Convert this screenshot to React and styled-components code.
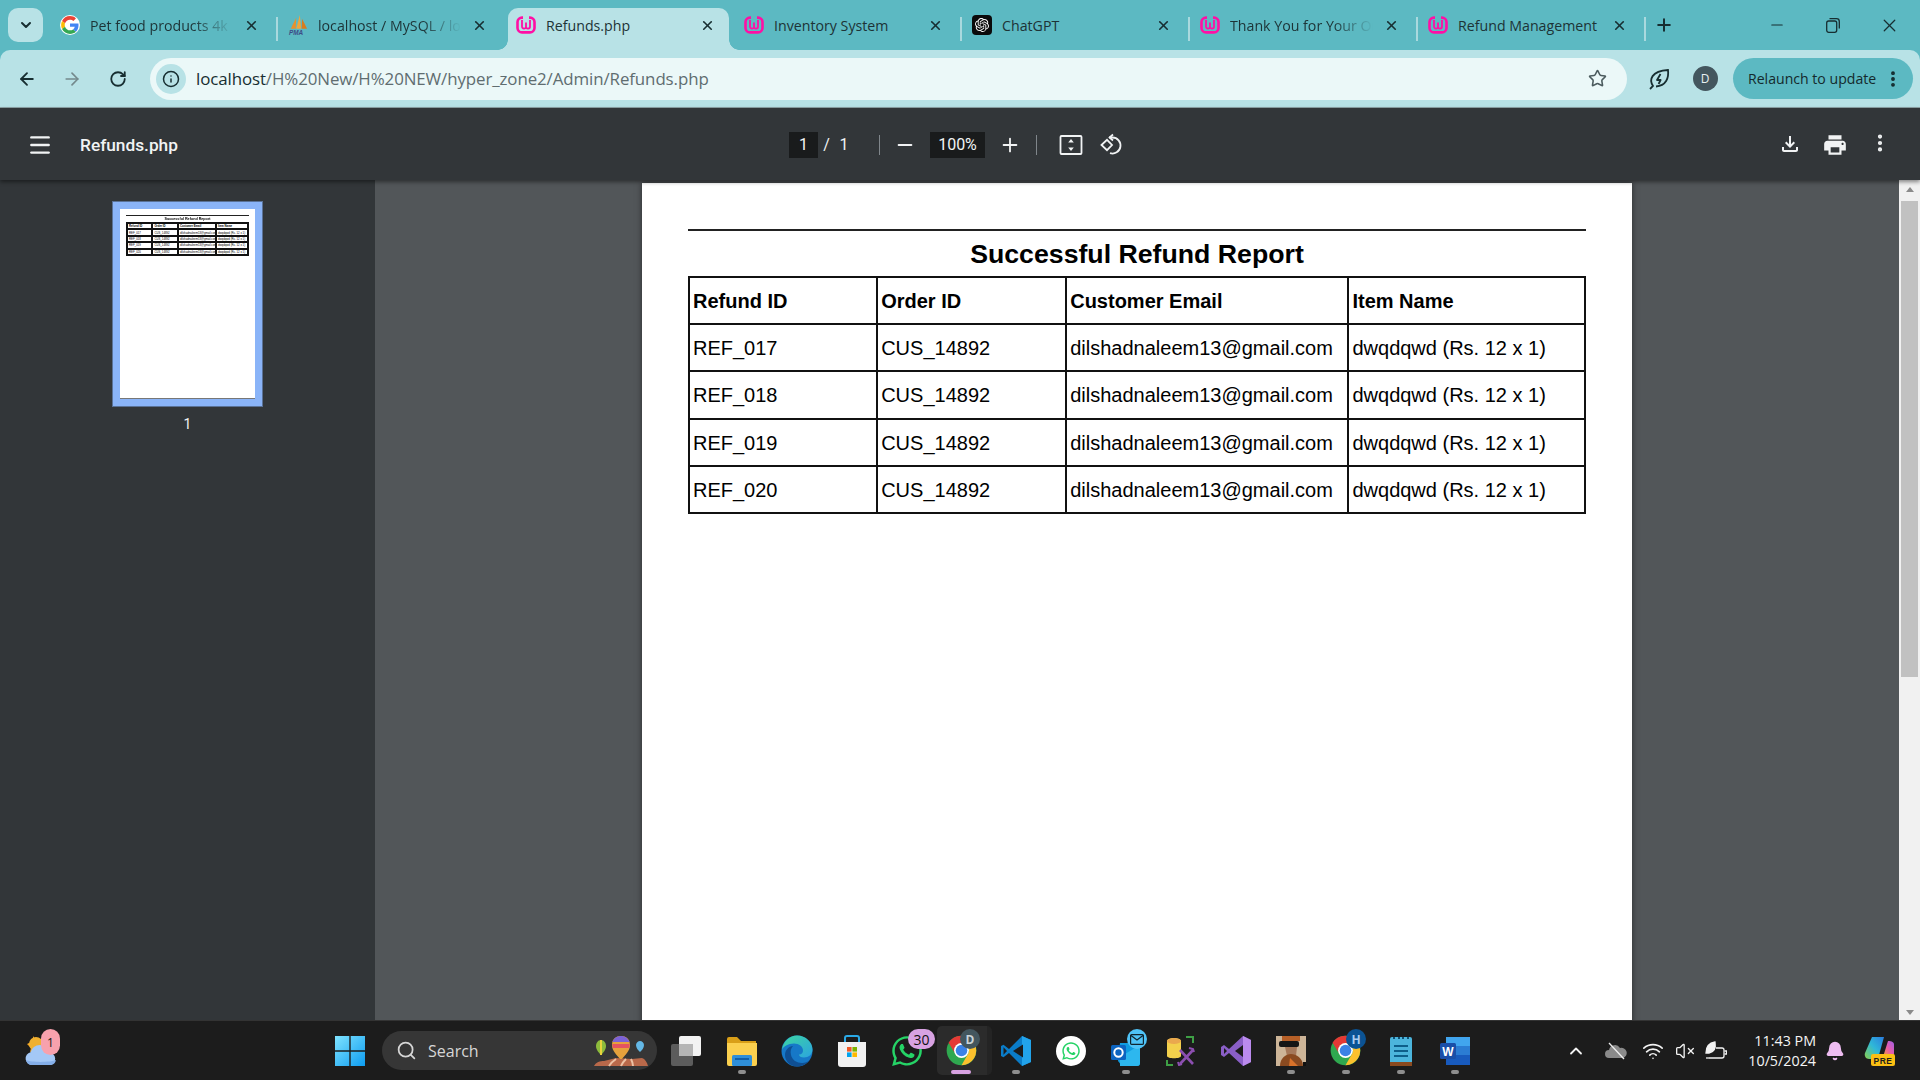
import React from "react";
import styled, { createGlobalStyle } from "styled-components";
import {
  ArrowLeft,
  ArrowRight,
  RotateCw,
  Info,
  Star,
  X,
  Plus,
  Minus,
  ChevronDown,
  ChevronUp,
  Search,
  Wifi,
  VolumeX,
  Bell,
  EllipsisVertical,
  Menu,
} from "lucide-react";
import { SiOpenai } from "react-icons/si";
import { FaWhatsapp } from "react-icons/fa";
import { MdOutlineFileDownload, MdPrint } from "react-icons/md";

const GlobalStyle = createGlobalStyle`
  html, body { margin: 0; padding: 0; height: 100%; overflow: hidden; }
  #root { height: 100%; }
  * { box-sizing: border-box; }
  body { font-family: "Open Sans", "Noto Sans", sans-serif; }
`;

const Screen = styled.div`
  width: 1920px;
  height: 1080px;
  display: flex;
  flex-direction: column;
  overflow: hidden;
  background: #5cb9c2;
`;

/* ---- chrome tab strip ---- */
const TabStrip = styled.div`
  height: 50px;
  flex: none;
  display: flex;
  align-items: flex-end;
  padding-left: 8px;
  background: #5cb9c2;
`;
const TabSearch = styled.div`
  width: 35px;
  height: 34px;
  margin: 0 7px 8px 0;
  border-radius: 10px;
  background: #b8e2e6;
  display: flex;
  align-items: center;
  justify-content: center;
  color: #172e31;
`;
const Tab = styled.div`
  position: relative;
  width: 228px;
  height: 42px;
  flex: none;
  display: flex;
  align-items: center;
  padding: 0 17px 8px 10px;
  color: #1d3336;
  font-size: 14.2px;
  &::before {
    content: "";
    display: ${(p) => (p.$active ? "block" : "none")};
    position: absolute;
    top: 0;
    bottom: 0;
    left: 2px;
    right: 5px;
    border-radius: 10px 10px 0 0;
    background: #b8e2e6;
  }
  &::after {
    content: "";
    display: ${(p) => (p.$sep ? "block" : "none")};
    position: absolute;
    right: 0;
    top: 9px;
    width: 2px;
    height: 24px;
    background: #a9d9de;
  }
`;
const Flare = styled.span`
  position: absolute;
  bottom: 0;
  width: 10px;
  height: 10px;
  ${(p) => (p.$side === "left" ? "left: -8px;" : "right: -5px;")}
  background: radial-gradient(
    circle at ${(p) => (p.$side === "left" ? "0 0" : "100% 0")},
    transparent 9.5px,
    #b8e2e6 10px
  );
`;
const Favicon = styled.span`
  position: relative;
  width: 20px;
  height: 20px;
  flex: none;
  display: flex;
  align-items: center;
  justify-content: center;
`;
const TabTitle = styled.span`
  position: relative;
  flex: 1;
  margin-left: 10px;
  overflow: hidden;
  white-space: nowrap;
  ${(p) =>
    p.$fade &&
    `-webkit-mask-image: linear-gradient(90deg, #000 72%, transparent 100%);
     mask-image: linear-gradient(90deg, #000 72%, transparent 100%);`}
`;
const TabClose = styled.span`
  position: relative;
  flex: none;
  width: 20px;
  margin-left: 8px;
  display: flex;
  justify-content: center;
  color: #172e31;
`;
const NewTab = styled.div`
  width: 36px;
  height: 42px;
  padding-bottom: 8px;
  display: flex;
  align-items: center;
  justify-content: center;
  color: #172e31;
`;
const WindowControls = styled.div`
  margin-left: auto;
  height: 50px;
  display: flex;
  padding-right: 2px;
`;
const WindowButton = styled.div`
  width: 56.5px;
  display: flex;
  align-items: center;
  justify-content: center;
  color: #172e31;
`;

/* ---- address bar ---- */
const Toolbar = styled.div`
  height: 58px;
  flex: none;
  display: flex;
  align-items: center;
  padding: 0 7px 0 4px;
  background: #b8e2e6;
  border-radius: 10px 10px 0 0;
  border-bottom: 1px solid #8fa5a8;
`;
const NavButton = styled.div`
  width: 45.5px;
  flex: none;
  display: flex;
  justify-content: center;
  color: ${(p) => (p.$disabled ? "#74898c" : "#172e31")};
`;
const Omnibox = styled.div`
  flex: 1;
  height: 42px;
  margin-left: 9.5px;
  padding: 0 20px 0 6px;
  border-radius: 21px;
  background: #ebf8f8;
  display: flex;
  align-items: center;
  > svg {
    color: #4b5b5e;
  }
`;
const InfoChip = styled.span`
  width: 30px;
  height: 30px;
  flex: none;
  border-radius: 50%;
  background: #b8e2e6;
  display: flex;
  align-items: center;
  justify-content: center;
  color: #172e31;
`;
const Url = styled.div`
  flex: 1;
  margin-left: 10px;
  font-size: 16.9px;
  letter-spacing: -0.1px;
  color: #5f6d70;
  white-space: nowrap;
  b {
    font-weight: 400;
    color: #172e31;
  }
`;
const ActionSlot = styled.div`
  width: 46px;
  flex: none;
  margin-left: ${(p) => p.$ml || 0}px;
  display: flex;
  justify-content: center;
  color: #172e31;
`;
const Avatar = styled.span`
  width: 25px;
  height: 25px;
  border-radius: 50%;
  background: #43565e;
  color: #e8f0f2;
  font-size: 12px;
  display: flex;
  align-items: center;
  justify-content: center;
`;
const RelaunchPill = styled.div`
  width: 180px;
  height: 41px;
  margin-left: 5px;
  padding-left: 15px;
  border-radius: 21px;
  background: #5cb9c2;
  color: #14292c;
  font-size: 14.1px;
  display: flex;
  align-items: center;
  justify-content: space-between;
  white-space: nowrap;
  svg {
    margin-right: 10px;
  }
`;

/* ---- pdf viewer toolbar ---- */
const ViewerBar = styled.div`
  position: relative;
  z-index: 2;
  height: 72px;
  flex: none;
  display: flex;
  align-items: center;
  padding: 1px 18px 0 0;
  background: #323639;
  color: #f1f3f4;
  box-shadow: 0 2px 4px rgba(0, 0, 0, 0.45);
  font-family: Roboto, "Noto Sans", sans-serif;
`;
const ViewerLeft = styled.div`
  width: 789px;
  flex: none;
  display: flex;
  align-items: center;
`;
const MenuSlot = styled.div`
  width: 80px;
  display: flex;
  justify-content: center;
`;
const DocName = styled.div`
  font-size: 17.3px;
  font-weight: 500;
`;
const DarkField = styled.div`
  height: 26px;
  width: ${(p) => p.$w}px;
  flex: none;
  background: #191b1c;
  font-size: 16px;
  display: flex;
  align-items: center;
  justify-content: center;
`;
const PagerText = styled.span`
  width: ${(p) => p.$w}px;
  flex: none;
  text-align: center;
  font-size: 16px;
`;
const ViewerSep = styled.span`
  width: 1px;
  height: 20px;
  flex: none;
  margin-left: ${(p) => p.$ml}px;
  background: #80868b;
`;
const ViewerButton = styled.div`
  width: ${(p) => p.$w}px;
  flex: none;
  margin-left: ${(p) => p.$ml || 0}px;
  display: flex;
  justify-content: center;
`;
const ViewerRight = styled.div`
  margin-left: auto;
  display: flex;
`;

/* ---- viewer body ---- */
const ViewerBody = styled.div`
  flex: 1;
  min-height: 0;
  display: flex;
  overflow: hidden;
`;
const Sidebar = styled.aside`
  width: 375px;
  flex: none;
  padding: 21px 112px 0;
  background: #323639;
  color: #f1f3f4;
  font-family: Roboto, sans-serif;
`;
const ThumbFrame = styled.div`
  width: 151px;
  height: 206px;
  padding: 8px;
  background: #8ab4f8;
  outline: 1px solid #5a7297;
  outline-offset: -1px;
`;
const ThumbNumber = styled.div`
  margin-top: 9px;
  text-align: center;
  font-size: 14px;
`;
const Canvas = styled.main`
  flex: 1;
  display: flex;
  justify-content: center;
  padding-top: 3px;
  background: #525659;
`;
const Sheet = styled.div`
  display: flex;
  flex-direction: column;
  flex: none;
  font-family: "Liberation Sans", Arial, sans-serif;
  background: #fff;
  color: #000;
  width: ${(p) => (p.$mini ? 135 : 990)}px;
  height: ${(p) => (p.$mini ? 190 : 1400)}px;
  padding: ${(p) => (p.$mini ? "6px 6px 0" : "46px 46px 0")};
  box-shadow: ${(p) => (p.$mini ? "none" : "0 0 6px rgba(0, 0, 0, 0.5)")};
  border-bottom: ${(p) => (p.$mini ? "1px solid #777" : "none")};
`;
const SheetRule = styled.div`
  flex: none;
  height: ${(p) => (p.$mini ? 1 : 2)}px;
  background: #222;
`;
const SheetTitle = styled.h1`
  margin: 0;
  padding-top: ${(p) => (p.$mini ? 0 : 1)}px;
  text-align: center;
  font-weight: 700;
  font-size: ${(p) => (p.$mini ? 3.7 : 26.7)}px;
  line-height: ${(p) => (p.$mini ? 6 : 44)}px;
  ${(p) => p.$mini && "filter: blur(0.3px);"}
`;
const ReportTable = styled.table`
  width: 100%;
  table-layout: fixed;
  border-collapse: collapse;
  font-size: ${(p) => (p.$mini ? 2.8 : 20)}px;
  th,
  td {
    height: ${(p) => (p.$mini ? 6.4 : 47.2)}px;
    padding: ${(p) => (p.$mini ? "0 0 0 1px" : "2px 0 0 3px")};
    border: 2px solid #111;
    text-align: left;
    white-space: nowrap;
    overflow: hidden;
  }
  th {
    font-weight: 700;
  }
`;
const ScrollTrack = styled.div`
  width: 21px;
  flex: none;
  padding: 7px 2px 0;
  background: #f1f1f1;
  display: flex;
  flex-direction: column;
  align-items: center;
`;
const ScrollArrow = styled.span`
  width: 0;
  height: 0;
  border-left: 4px solid transparent;
  border-right: 4px solid transparent;
  ${(p) => (p.$down ? "border-top" : "border-bottom")}: 5px solid #8a8a8a;
  ${(p) => (p.$down ? "margin-top: auto; margin-bottom: 5px;" : "")}
`;
const ScrollThumb = styled.div`
  width: 17px;
  height: 476px;
  margin-top: 9px;
  background: #c1c1c1;
`;

/* ---- windows taskbar ---- */
const Taskbar = styled.footer`
  position: relative;
  z-index: 3;
  height: 60px;
  flex: none;
  display: flex;
  align-items: center;
  background: #1c1c1c;
  border-top: 1px solid #333;
  color: #fff;
`;
const WeatherSlot = styled.div`
  position: relative;
  width: 82px;
  height: 100%;
  flex: none;
  display: flex;
  align-items: center;
  justify-content: center;
  margin-right: 240px;
`;
const StartSlot = styled.div`
  width: 55px;
  flex: none;
  display: flex;
  justify-content: center;
`;
const SearchPill = styled.div`
  position: relative;
  width: 275px;
  height: 39px;
  flex: none;
  margin: 0 2.5px 0 5px;
  padding-left: 14px;
  border-radius: 20px;
  background: #363636;
  color: #d6d6d6;
  font-size: 16px;
  display: flex;
  align-items: center;
  gap: 11px;
`;
const SearchArt = styled.span`
  position: absolute;
  right: 8px;
  top: 4px;
  display: flex;
`;
const AppSlot = styled.div`
  position: relative;
  width: 54.9px;
  height: 100%;
  flex: none;
  display: flex;
  align-items: center;
  justify-content: center;
  &::before {
    content: "";
    display: ${(p) => (p.$focused ? "block" : "none")};
    position: absolute;
    left: 3px;
    width: 50px;
    top: 5px;
    bottom: 5px;
    border-radius: 5px;
    background: #2b2b2b;
    border-right: 5px solid #242424;
  }
  &::after {
    content: "";
    display: ${(p) => (p.$running || p.$focused ? "block" : "none")};
    position: absolute;
    bottom: 6px;
    left: 50%;
    transform: translateX(-50%);
    width: ${(p) => (p.$focused ? 20 : 8)}px;
    height: 4px;
    border-radius: 2px;
    background: ${(p) => (p.$focused ? "#d8a2e2" : "#8e8e8e")};
  }
  > svg {
    position: relative;
  }
`;
const Badge = styled.span`
  position: absolute;
  top: 8px;
  left: ${(p) => p.$left}px;
  min-width: ${(p) => p.$size || 20}px;
  height: ${(p) => p.$h || 20}px;
  border-radius: 11px;
  background: ${(p) => p.$bg};
  color: ${(p) => p.$fg || "#111"};
  font-size: ${(p) => p.$font || 12}px;
  font-weight: ${(p) => p.$weight || 400};
  display: flex;
  align-items: center;
  justify-content: center;
`;
const Tray = styled.div`
  margin-left: auto;
  display: flex;
  align-items: center;
  padding-right: 14px;
`;
const TraySlot = styled.div`
  position: relative;
  width: ${(p) => p.$w}px;
  flex: none;
  display: flex;
  justify-content: center;
  color: #f2f2f2;
`;
const Clock = styled.div`
  width: 84px;
  flex: none;
  text-align: right;
  font-size: 14.3px;
  line-height: 20px;
  color: #f5f5f5;
  white-space: nowrap;
`;

/* ---- drawn icons ---- */
const GoogleIcon = () => (
  <svg width="20" height="20" viewBox="-3 -3 54 54">
    <circle cx="24" cy="24" r="27" fill="#fff" />
    <path fill="#EA4335" d="M24 9.5c3.54 0 6.71 1.22 9.21 3.6l6.85-6.85C35.9 2.38 30.47 0 24 0 14.62 0 6.51 5.38 2.56 13.22l7.98 6.19C12.43 13.72 17.74 9.5 24 9.5z" />
    <path fill="#4285F4" d="M46.98 24.55c0-1.57-.15-3.09-.38-4.55H24v9.02h12.94c-.58 2.96-2.26 5.48-4.78 7.18l7.73 6c4.51-4.18 7.09-10.36 7.09-17.65z" />
    <path fill="#FBBC05" d="M10.53 28.59c-.48-1.45-.76-2.99-.76-4.59s.27-3.14.76-4.59l-7.98-6.19C.92 16.46 0 20.12 0 24c0 3.88.92 7.54 2.56 10.78l7.97-6.19z" />
    <path fill="#34A853" d="M24 48c6.48 0 11.93-2.13 15.89-5.81l-7.73-6c-2.15 1.45-4.92 2.3-8.16 2.3-6.26 0-11.57-4.22-13.47-9.91l-7.98 6.19C6.51 42.62 14.62 48 24 48z" />
  </svg>
);
const PmaIcon = () => (
  <svg width="22" height="22" viewBox="0 0 22 22">
    <path fill="#e8912c" d="M3 15 9 3 8.5 15z" />
    <path fill="#f0a63c" d="M9 15 13 0l1.5 15z" />
    <path fill="#d97c1e" d="M15 15 15.5 4 21 15z" />
    <text x="1" y="21.5" fontSize="7" fontWeight="700" fontStyle="italic" fontFamily="Liberation Sans" fill="#3c4c86">PMA</text>
  </svg>
);
const WampIcon = () => (
  <svg width="20" height="20" viewBox="0 0 20 20" fill="none" stroke="#ff0fa5">
    <path d="M7 2.6H6A4.5 4.5 0 0 0 1.5 7v6A4.5 4.5 0 0 0 6 17.4h8a4.5 4.5 0 0 0 4.5-4.4V7A4.5 4.5 0 0 0 14 2.6h-1" strokeWidth="2.6" />
    <path d="M6 5v6.5a2 2 0 0 0 4 .2V7.5m0 4.2a2 2 0 0 0 4-.2V5" strokeWidth="1.8" />
  </svg>
);
const GptIcon = () => (
  <svg width="20" height="20" viewBox="0 0 20 20">
    <rect width="20" height="20" rx="4" fill="#0b0b0b" />
    <SiOpenai x="3" y="3" size="14" color="#fff" />
  </svg>
);
const FitIcon = () => (
  <svg width="24" height="24" viewBox="0 0 24 24" fill="none">
    <rect x="1.5" y="3" width="21" height="18" rx="1" stroke="#f1f3f4" strokeWidth="1.8" />
    <path d="M12 6l-2.8 3.4h5.6zM12 18l-2.8-3.4h5.6z" fill="#f1f3f4" />
  </svg>
);
const RotateIcon = () => (
  <svg width="24" height="24" viewBox="0 0 24 24" fill="none" stroke="#f1f3f4" strokeWidth="1.8">
    <path d="M2.5 12 8 6.8 13 12l-5 5.2z" />
    <path d="M10 4.5h3.5a8 8 0 1 1-2.5 15.6" />
    <path d="M14 1.5 10.6 4.5 14 7.5" />
  </svg>
);
const LeafBoltIcon = () => (
  <svg width="22" height="24" viewBox="0 0 22 24" fill="none" stroke="#172e31" strokeWidth="1.8">
    <path d="M2 22l3-3C1 13 3 4 20 3c1 8-2 16-12 16.5" />
    <path d="M12.5 7 9 13h3.6l-2 4" strokeLinejoin="round" />
  </svg>
);
const RestoreIcon = () => (
  <svg width="14" height="15" viewBox="0 0 14 15" fill="none" stroke="#172e31" strokeWidth="1.3">
    <rect x="0.7" y="3" width="10" height="11.3" rx="2" />
    <path d="M3.5 .7h7a2.8 2.8 0 0 1 2.8 2.8v7" />
  </svg>
);
const WeatherIcon = () => (
  <svg width="34" height="36" viewBox="0 0 34 36">
    <path d="M9 3v5l-6 3 4 4-1 4 12-3z" fill="#f5a623" />
    <circle cx="12" cy="11" r="7" fill="#f0b030" />
    <path d="M8 32a6.5 6.5 0 0 1-1.5-12.8A9.5 9.5 0 0 1 25 19.5a6.3 6.3 0 0 1 1 12.5z" fill="#a4c8f6" />
    <path d="M2 27c5 2.5 24 2.5 30 0-.5 3-3 5-6 5H8c-3 0-5.5-2-6-5z" fill="#84aee8" />
  </svg>
);
const WindowsIcon = () => (
  <svg width="30" height="30" viewBox="0 0 30 30">
    <defs>
      <linearGradient id="winGrad" x1="0" y1="0" x2="1" y2="1">
        <stop offset="0" stopColor="#7fe3ff" />
        <stop offset="1" stopColor="#0d9cf0" />
      </linearGradient>
    </defs>
    <path fill="url(#winGrad)" d="M0 0h14.3v14.3H0zM15.7 0H30v14.3H15.7zM0 15.7h14.3V30H0zM15.7 15.7H30V30H15.7z" />
  </svg>
);
const BalloonArt = () => (
  <svg width="56" height="32" viewBox="0 0 56 32">
    <path d="M1 31c2-4 6-5 10-5l12-3 16 1 10-1c3 1 5 4 6 8z" fill="#b9694a" />
    <path d="M16 31c2-3 4-5 7-7M28 31c1-3 3-5 5-7M40 31c0-3-1-5-2-7" stroke="#ecc1a4" strokeWidth="2" fill="none" />
    <path d="M8 5c3 0 5 3 5 6 0 4-3 7-5 9-2-2-5-5-5-9 0-3 2-6 5-6z" fill="#8dbb3c" />
    <path d="M8 5v15" stroke="#e8d23c" strokeWidth="2" />
    <path d="M28 1c5 0 9 3 9 9 0 6-5 10-8 14h-2c-3-4-8-8-8-14 0-6 4-9 9-9z" fill="#e6a13c" />
    <path d="M19.5 7c1-4 5-6 8.5-6s7 2 8.5 6z" fill="#7b62d6" />
    <path d="M19.3 9h17.4l-.5 4H19.8z" fill="#e5535f" />
    <path d="M47 6c2 0 4 2 4 4 0 3-2 5-4 7-2-2-4-4-4-7 0-2 2-4 4-4z" fill="#64b8e6" />
  </svg>
);
const TaskViewIcon = () => (
  <svg width="32" height="30" viewBox="0 0 32 30">
    <rect x="0" y="8" width="22" height="22" rx="2" fill="#5c5c5c" />
    <rect x="8" y="0" width="22" height="20" rx="2" fill="#f2f2f2" />
    <rect x="8" y="8" width="14" height="12" fill="#b5b5b5" />
  </svg>
);
const ExplorerIcon = () => (
  <svg width="32" height="30" viewBox="0 0 32 30">
    <path d="M1 3a2 2 0 0 1 2-2h8l4 4h15v4H1z" fill="#d99f18" />
    <path d="M1 7h30v21a2 2 0 0 1-2 2H3a2 2 0 0 1-2-2z" fill="#fbd04f" />
    <rect x="6" y="19" width="20" height="11" rx="1.5" fill="#2f8fd8" />
    <rect x="9" y="22" width="14" height="2" fill="#0f5fa8" />
  </svg>
);
const EdgeIcon = () => (
  <svg width="32" height="32" viewBox="0 0 32 32">
    <defs>
      <linearGradient id="edgeA" x1="0" y1="0" x2="1" y2="1">
        <stop offset="0" stopColor="#3dd6a0" />
        <stop offset="1" stopColor="#2ba4e0" />
      </linearGradient>
    </defs>
    <circle cx="16" cy="16" r="15.5" fill="#1678c8" />
    <path d="M1 15C2 6 9 .5 16 .5c9 0 15.5 7 15.5 14 0 5-4 8-8.5 8-3 0-5-1-5-3 3 0 4-2 4-4 0-4-4-7-9-7-6 0-11 3-12 6.5z" fill="url(#edgeA)" />
    <path d="M16 31.5C9 31.5 4 26 4 20c0-5 4-9 8-9-2 2-3 5-2 9 1 5 6 8 11 8 3 0 6-1 8-3-3 4-8 6.5-13 6.5z" fill="#0f4f93" />
  </svg>
);
const StoreIcon = () => (
  <svg width="30" height="32" viewBox="0 0 30 32">
    <path d="M8 7V3a2 2 0 0 1 2-2h10a2 2 0 0 1 2 2v4" fill="none" stroke="#2aa9e6" strokeWidth="2" />
    <path d="M1 7h28v22a3 3 0 0 1-3 3H4a3 3 0 0 1-3-3z" fill="#f1f1f1" />
    <path fill="#f05a28" d="M10 12h4.6v4.6H10z" />
    <path fill="#7db500" d="M15.4 12H20v4.6h-4.6z" />
    <path fill="#00a4ef" d="M10 17.4h4.6V22H10z" />
    <path fill="#ffb900" d="M15.4 17.4H20V22h-4.6z" />
  </svg>
);
const WhatsAppIcon = () => <FaWhatsapp size={34} color="#25d366" />;
const ChromeIcon = () => (
  <svg width="31" height="31" viewBox="0 0 48 48">
    <circle cx="24" cy="24" r="23" fill="#2fa84f" />
    <path fill="#fbc02d" d="M44 13A23 23 0 0 1 24 47l10-17.5A11 11 0 0 0 24 13z" />
    <path fill="#e53935" d="M24 1a23 23 0 0 1 20 12H24a11 11 0 0 0-9.5 16.5L4 12A23 23 0 0 1 24 1z" />
    <circle cx="24" cy="24" r="11.5" fill="#fff" />
    <circle cx="24" cy="24" r="9" fill="#3b82e6" />
  </svg>
);
const VsCodeIcon = () => (
  <svg width="32" height="32" viewBox="0 0 32 32">
    <path d="M22 1 9 14 3.5 9.7 1 11v10l2.5 1.3L9 18l13 13 9-4V5z" fill="#0a7cc8" />
    <path d="M22 1l9 4v22l-9 4z" fill="#22a3ea" />
    <path d="M23 9.5v13L13 16z" fill="#1c1c1c" />
    <path d="M3.5 12.3 7 16l-3.5 3.7z" fill="#1c1c1c" />
  </svg>
);
const WhatsAppRound = () => (
  <svg width="30" height="30" viewBox="0 0 30 30">
    <circle cx="15" cy="15" r="15" fill="#fff" />
    <FaWhatsapp x="5" y="5" size="20" color="#25d366" />
  </svg>
);
const OutlookIcon = () => (
  <svg width="32" height="32" viewBox="0 0 32 32">
    <path d="M10 8h20v20a3 3 0 0 1-3 3H12l-4-5z" fill="#0f9ce0" />
    <path d="M10 22 30 10v18a3 3 0 0 1-3 3H10z" fill="#2db7ee" />
    <rect x="1" y="10" width="15" height="15" rx="1.5" fill="#0c64c0" />
    <circle cx="8.5" cy="17.5" r="4.2" fill="none" stroke="#fff" strokeWidth="2" />
  </svg>
);
const MailGlyph = () => (
  <svg width="14" height="11" viewBox="0 0 14 11" fill="none" stroke="#10242e" strokeWidth="1.2">
    <rect x="0.6" y="0.6" width="12.8" height="9.8" rx="1" />
    <path d="M1 1.5 7 6l6-4.5" />
  </svg>
);
const AccessToolIcon = () => (
  <svg width="30" height="30" viewBox="0 0 30 30" fill="none">
    <path d="M1 5c0-4 14-4 14 0v15c0 3-14 3-14 0z" fill="#f3d04c" />
    <ellipse cx="8" cy="5" rx="7" ry="3" fill="#eaa84e" />
    <path d="M20 1h7v6M1 24v5h6" stroke="#3ea045" strokeWidth="2" />
    <path d="M14 14l13 14M27 14 14 28" stroke="#8c4fb0" strokeWidth="2.6" />
    <path d="M23 12l4 1 1 3M12 26l1 3 3-1" stroke="#8c4fb0" strokeWidth="2" />
  </svg>
);
const VisualStudioIcon = () => (
  <svg width="32" height="32" viewBox="0 0 32 32">
    <path d="M23 1 31 5v22l-8 4L9 18l-5 4-3-2V12l3-2 5 4z" fill="#8a5fc7" />
    <path d="M23 1l8 4v22l-8 4z" fill="#bb8bee" />
    <path d="M23 10v12l-8-6z" fill="#1c1c1c" />
    <path d="M4 13l3 3-3 3z" fill="#1c1c1c" />
  </svg>
);
const PortraitIcon = () => (
  <svg width="30" height="30" viewBox="0 0 30 30">
    <rect width="30" height="30" fill="#cdb598" />
    <path d="M6 0h18v5H6z" fill="#b65f27" />
    <rect x="3" y="5" width="20" height="6" rx="2" fill="#151515" />
    <path d="M9 11h12l-1 9H11z" fill="#a5785a" />
    <path d="M4 30c0-8 6-12 11-12s12 4 12 12z" fill="#8a4a20" />
    <path d="M14 22l8 8h-9z" fill="#d9722a" />
    <rect x="27" y="26" width="3" height="4" fill="#111" />
  </svg>
);
const NotepadIcon = () => (
  <svg width="24" height="30" viewBox="0 0 24 30">
    <rect x="1" y="1" width="22" height="29" rx="2" fill="#4cb5dc" />
    <rect x="1" y="26" width="22" height="4" fill="#8a4a20" />
    <path d="M5 1v2M10 1v2M14 1v2M19 1v2" stroke="#0e4f73" strokeWidth="2" />
    <path d="M5 10h14M5 15h14M5 20h14" stroke="#0e5f8a" strokeWidth="2" />
  </svg>
);
const WordIcon = () => (
  <svg width="30" height="28" viewBox="0 0 30 28">
    <rect x="6" y="0" width="24" height="28" rx="1.5" fill="#2b7cd3" />
    <rect x="6" y="0" width="24" height="9" fill="#41a5ee" />
    <rect x="6" y="18" width="24" height="10" fill="#185abd" />
    <rect x="0" y="6" width="16" height="16" rx="1.5" fill="#1a4fa8" />
    <text x="8" y="18.5" textAnchor="middle" fontSize="12" fontWeight="700" fontFamily="Liberation Sans" fill="#fff">W</text>
  </svg>
);
const OneDriveOffIcon = () => (
  <svg width="22" height="18" viewBox="0 0 22 18">
    <path d="M4 16a4 4 0 0 1 0-8 6 6 0 0 1 11-2 5 5 0 0 1 3 10z" fill="#8a8a8a" />
    <path d="M4 1l15 16" stroke="#eee" strokeWidth="1.3" />
  </svg>
);
const LeafBatteryIcon = () => (
  <svg width="22" height="20" viewBox="0 0 22 20" fill="none" stroke="#f2f2f2" strokeWidth="1.3">
    <path d="M4 17h13a2 2 0 0 0 2-2V9a2 2 0 0 0-2-2h-6" />
    <path d="M19.5 10h2v3h-2" />
    <path d="M1 12C1 6 4 2 10 1c1 6-1 10-6 11z" fill="#f2f2f2" />
    <path d="M1 17h3" />
  </svg>
);
const CopilotIcon = () => (
  <svg width="32" height="30" viewBox="0 0 32 30">
    <defs>
      <linearGradient id="copA" x1="0" y1="1" x2="1" y2="0">
        <stop offset="0" stopColor="#8ad04a" />
        <stop offset="0.5" stopColor="#2fb8d8" />
        <stop offset="1" stopColor="#2a7de0" />
      </linearGradient>
      <linearGradient id="copB" x1="0" y1="1" x2="1" y2="0">
        <stop offset="0" stopColor="#f0a030" />
        <stop offset="0.5" stopColor="#e85ca8" />
        <stop offset="1" stopColor="#a060e8" />
      </linearGradient>
    </defs>
    <path d="M8 1h12l-5 18c-1 3-2 4-5 4H5c-3 0-5-3-4-6z" fill="url(#copA)" />
    <path d="M24 5l-5 16h8c2 0 3-1 3-4V9c0-3-2-4-6-4z" fill="url(#copB)" />
    <rect x="7" y="18" width="24" height="12" rx="2" fill="#fbbf14" />
    <text x="19" y="27.5" textAnchor="middle" fontSize="8.5" fontWeight="700" fontFamily="Liberation Sans" fill="#1c1c1c" letterSpacing="0.5">PRE</text>
  </svg>
);

const tabs = [
  { title: "Pet food products 4k", icon: <GoogleIcon />, sep: true, fade: true },
  { title: "localhost / MySQL / localhost", icon: <PmaIcon />, fade: true },
  { title: "Refunds.php", icon: <WampIcon />, active: true },
  { title: "Inventory System", icon: <WampIcon />, sep: true },
  { title: "ChatGPT", icon: <GptIcon />, sep: true },
  { title: "Thank You for Your Order", icon: <WampIcon />, sep: true, fade: true },
  { title: "Refund Management", icon: <WampIcon />, sep: true },
];

const heads = ["Refund ID", "Order ID", "Customer Email", "Item Name"];
const refunds = ["REF_017", "REF_018", "REF_019", "REF_020"];
const colWidths = ["21%", "21.1%", "31.5%", "26.4%"];

const Report = ({ mini }) => (
  <Sheet $mini={mini}>
    <SheetRule $mini={mini} />
    <SheetTitle $mini={mini}>Successful Refund Report</SheetTitle>
    <ReportTable $mini={mini}>
      <colgroup>
        {colWidths.map((w, i) => (
          <col key={i} width={w} />
        ))}
      </colgroup>
      <thead>
        <tr>
          {heads.map((h) => (
            <th key={h}>{h}</th>
          ))}
        </tr>
      </thead>
      <tbody>
        {refunds.map((r) => (
          <tr key={r}>
            <td>{r}</td>
            <td>CUS_14892</td>
            <td>dilshadnaleem13@gmail.com</td>
            <td>dwqdqwd (Rs. 12 x 1)</td>
          </tr>
        ))}
      </tbody>
    </ReportTable>
  </Sheet>
);

export default function App() {
  return (
    <Screen>
      <GlobalStyle />
      <TabStrip>
        <TabSearch>
          <ChevronDown size={16} strokeWidth={3} />
        </TabSearch>
        {tabs.map((t) => (
          <Tab key={t.title} $active={t.active} $sep={t.sep}>
            {t.active && <Flare $side="left" />}
            {t.active && <Flare $side="right" />}
            <Favicon>{t.icon}</Favicon>
            <TabTitle $fade={t.fade}>{t.title}</TabTitle>
            <TabClose>
              <X size={15} strokeWidth={2.6} />
            </TabClose>
          </Tab>
        ))}
        <NewTab>
          <Plus size={20} strokeWidth={2.4} />
        </NewTab>
        <WindowControls>
          <WindowButton>
            <Minus size={18} strokeWidth={1.4} />
          </WindowButton>
          <WindowButton>
            <RestoreIcon />
          </WindowButton>
          <WindowButton>
            <X size={21} strokeWidth={1.4} />
          </WindowButton>
        </WindowControls>
      </TabStrip>

      <Toolbar>
        <NavButton>
          <ArrowLeft size={20} strokeWidth={2.2} />
        </NavButton>
        <NavButton $disabled>
          <ArrowRight size={20} strokeWidth={2} />
        </NavButton>
        <NavButton>
          <RotateCw size={18} strokeWidth={2.4} />
        </NavButton>
        <Omnibox>
          <InfoChip>
            <Info size={18} strokeWidth={2} />
          </InfoChip>
          <Url>
            <b>localhost</b>/H%20New/H%20NEW/hyper_zone2/Admin/Refunds.php
          </Url>
          <Star size={19} strokeWidth={2} />
        </Omnibox>
        <ActionSlot $ml={9}>
          <LeafBoltIcon />
        </ActionSlot>
        <ActionSlot>
          <Avatar>D</Avatar>
        </ActionSlot>
        <RelaunchPill>
          Relaunch to update
          <EllipsisVertical size={20} strokeWidth={2.6} />
        </RelaunchPill>
      </Toolbar>

      <ViewerBar>
        <ViewerLeft>
          <MenuSlot>
            <Menu size={26} strokeWidth={2.2} />
          </MenuSlot>
          <DocName>Refunds.php</DocName>
        </ViewerLeft>
        <DarkField $w={29}>1</DarkField>
        <PagerText $w={17}>/</PagerText>
        <PagerText $w={18}>1</PagerText>
        <ViewerSep $ml={26} />
        <ViewerButton $w={50}>
          <Minus size={22} strokeWidth={2} />
        </ViewerButton>
        <DarkField $w={55}>100%</DarkField>
        <ViewerButton $w={49}>
          <Plus size={22} strokeWidth={2} />
        </ViewerButton>
        <ViewerSep $ml={2} />
        <ViewerButton $w={40} $ml={14}>
          <FitIcon />
        </ViewerButton>
        <ViewerButton $w={40}>
          <RotateIcon />
        </ViewerButton>
        <ViewerRight>
          <ViewerButton $w={45}>
            <MdOutlineFileDownload size={24} />
          </ViewerButton>
          <ViewerButton $w={45}>
            <MdPrint size={26} />
          </ViewerButton>
          <ViewerButton $w={45}>
            <EllipsisVertical size={22} strokeWidth={2.6} />
          </ViewerButton>
        </ViewerRight>
      </ViewerBar>

      <ViewerBody>
        <Sidebar>
          <ThumbFrame>
            <Report mini />
          </ThumbFrame>
          <ThumbNumber>1</ThumbNumber>
        </Sidebar>
        <Canvas>
          <Report />
        </Canvas>
        <ScrollTrack>
          <ScrollArrow />
          <ScrollThumb />
          <ScrollArrow $down />
        </ScrollTrack>
      </ViewerBody>

      <Taskbar>
        <WeatherSlot>
          <WeatherIcon />
          <Badge $left={41} $bg="#f7a1ad" $size={19} $h={26}>
            1
          </Badge>
        </WeatherSlot>
        <StartSlot>
          <WindowsIcon />
        </StartSlot>
        <SearchPill>
          <Search size={21} strokeWidth={2} />
          Search
          <SearchArt>
            <BalloonArt />
          </SearchArt>
        </SearchPill>
        <AppSlot>
          <TaskViewIcon />
        </AppSlot>
        <AppSlot $running>
          <ExplorerIcon />
        </AppSlot>
        <AppSlot>
          <EdgeIcon />
        </AppSlot>
        <AppSlot>
          <StoreIcon />
        </AppSlot>
        <AppSlot>
          <WhatsAppIcon />
          <Badge $left={29} $bg="#d8a2e2" $size={27} $font={14}>
            30
          </Badge>
        </AppSlot>
        <AppSlot $focused>
          <ChromeIcon />
          <Badge $left={26} $bg="#43565e" $fg="#c9d4d8" $weight={700}>
            D
          </Badge>
        </AppSlot>
        <AppSlot $running>
          <VsCodeIcon />
        </AppSlot>
        <AppSlot>
          <WhatsAppRound />
        </AppSlot>
        <AppSlot $running>
          <OutlookIcon />
          <Badge $left={28} $bg="#4fc3f7">
            <MailGlyph />
          </Badge>
        </AppSlot>
        <AppSlot>
          <AccessToolIcon />
        </AppSlot>
        <AppSlot>
          <VisualStudioIcon />
        </AppSlot>
        <AppSlot $running>
          <PortraitIcon />
        </AppSlot>
        <AppSlot $running>
          <ChromeIcon />
          <Badge $left={28} $bg="#0b5394" $fg="#a9cdf0" $weight={700}>
            H
          </Badge>
        </AppSlot>
        <AppSlot $running>
          <NotepadIcon />
        </AppSlot>
        <AppSlot $running>
          <WordIcon />
        </AppSlot>
        <Tray>
          <TraySlot $w={40}>
            <ChevronUp size={20} strokeWidth={2.2} />
          </TraySlot>
          <TraySlot $w={40}>
            <OneDriveOffIcon />
          </TraySlot>
          <TraySlot $w={34}>
            <Wifi size={22} strokeWidth={1.8} />
          </TraySlot>
          <TraySlot $w={30}>
            <VolumeX size={20} strokeWidth={1.6} />
          </TraySlot>
          <TraySlot $w={32}>
            <LeafBatteryIcon />
          </TraySlot>
          <Clock>
            <div>11:43 PM</div>
            <div>10/5/2024</div>
          </Clock>
          <TraySlot $w={38}>
            <Bell size={20} color="#efbdf2" fill="#efbdf2" />
          </TraySlot>
          <TraySlot $w={52}>
            <CopilotIcon />
          </TraySlot>
        </Tray>
      </Taskbar>
    </Screen>
  );
}
